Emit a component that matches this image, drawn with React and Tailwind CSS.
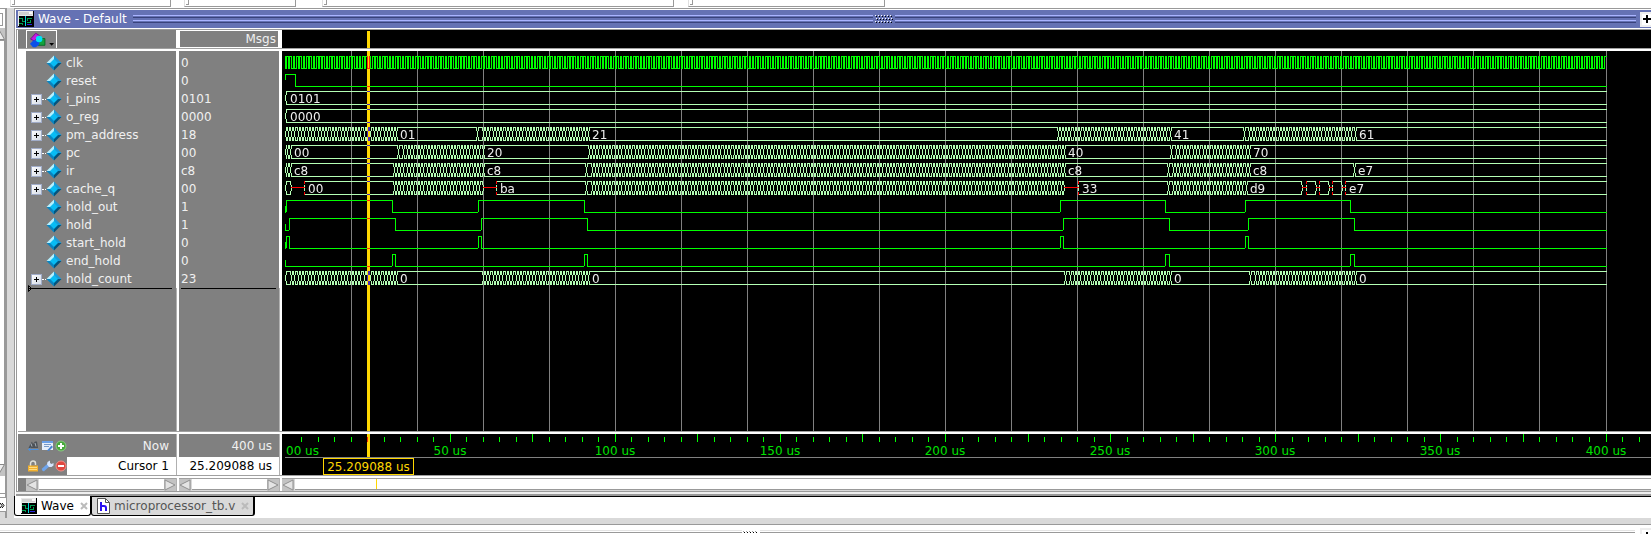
import React from "react";

const PX_PER_US = 3.3025;
const ORIGIN = 3;
const END = 1325;
const ROW = 18;
const CURSOR_X = 85;

const box = (x, y, w, h) => `M${x} ${y}h${w}v${h}h${-w}z`;
const timeX = (us) => Math.floor(ORIGIN + us * PX_PER_US);

const signals = [
  { name: "clk", value: "0", clock: true },
  { name: "reset", value: "0", highs: [[3, 13]] },
  { name: "i_pins", value: "0101", bus: [["v", 3, "0101"]] },
  { name: "o_reg", value: "0000", bus: [["v", 3, "0000"]] },
  { name: "pm_address", value: "18", bus: [["h", 3], ["v", 114, "01"], ["h", 195], ["v", 306, "21"], ["h", 776], ["v", 888, "41"], ["h", 962], ["v", 1073, "61"]] },
  { name: "pc", value: "00", bus: [["v", 3], ["v", 5], ["v", 8, "00"], ["h", 116], ["v", 201, "20"], ["h", 307], ["v", 782, "40"], ["h", 889], ["v", 967, "70"]] },
  { name: "ir", value: "c8", bus: [["v", 3], ["v", 5], ["v", 8, "c8"], ["h", 112], ["v", 201, "c8"], ["h", 304], ["v", 782, "c8"], ["h", 886], ["v", 967, "c8"], ["v", 1072, "e7"]] },
  { name: "cache_q", value: "00", bus: [["v", 3], ["z", 9], ["v", 22, "00"], ["h", 112], ["z", 201], ["v", 214, "ba"], ["h", 304], ["z", 782], ["v", 796, "33"], ["h", 886], ["v", 964, "d9"], ["z", 1020], ["v", 1024], ["z", 1034], ["v", 1037], ["z", 1047], ["v", 1050], ["z", 1060], ["v", 1063, "e7"]] },
  { name: "hold_out", value: "1", start: true, highs: [[4, 110], [196, 302], [778, 883], [963, 1068]] },
  { name: "hold", value: "1", start: true, highs: [[7, 113], [199, 305], [781, 887], [966, 1072]] },
  { name: "start_hold", value: "0", start: true, highs: [[4, 7], [196, 199], [778, 781], [963, 966]] },
  { name: "end_hold", value: "0", start: true, highs: [[110, 113], [302, 305], [883, 887], [1068, 1072]] },
  { name: "hold_count", value: "23", bus: [["v", 3], ["h", 9], ["v", 114, "0"], ["h", 201], ["v", 306, "0"], ["h", 783], ["v", 888, "0"], ["h", 968], ["v", 1073, "0"]] },
];

function clockPath(top) {
  let d = "";
  for (let k = 0; k < 800; k++) {
    const x = timeX(k / 2);
    const next = timeX((k + 1) / 2);
    d += box(x, top + 2, 1, 12);
    d += box(x, k % 2 ? top + 2 : top + 14, next - x + 1, 1);
  }
  return d;
}

function bitPath(top, highs, start) {
  let d = "";
  let x = ORIGIN;
  if (start) d += box(ORIGIN, top + 8, 1, 6);
  highs.forEach(([a, b]) => {
    if (a > x) d += box(x, top + 14, a - x, 1);
    d += box(a, top + 2, 1, a === ORIGIN ? 6 : 12);
    d += box(a, top + 2, b - a + 1, 1) + box(b, top + 2, 1, 12);
    x = b;
  });
  return d + box(x, top + 14, END - x, 1);
}

function busPaths(top, bus) {
  let line = "";
  let floating = "";
  const segments = [];
  bus.forEach(([kind, x, label], i) => {
    const end = i + 1 < bus.length ? bus[i + 1][1] : END;
    if (kind !== "h") {
      segments.push([kind, x, end, label]);
      return;
    }
    let at = x;
    for (let k = 1; k < 401; k++) {
      const next = timeX(k);
      if (next > x + 2 && next < end - 2) {
        segments.push(["v", at, next]);
        at = next;
      }
    }
    segments.push(["v", at, end]);
  });
  segments.forEach(([kind, a, b], i) => {
    if (kind === "z") {
      floating += box(a, top + 7, b - a, 1);
      return;
    }
    const afterFloat = i > 0 && segments[i - 1][0] === "z";
    line += box(a + 1, top + 1, Math.max(b - a - 1, 1), 1) + box(a + 1, top + 14, Math.max(b - a - 1, 1), 1);
    line += box(a, top + 5, 1, 6);
    if (afterFloat) {
      floating += box(a, top + 1, 1, 3) + box(a, top + 12, 1, 3) + box(a, top + 7, 1, 1);
    } else {
      line += box(a + 1, top + 2, 1, 3) + box(a + 1, top + 11, 1, 3);
    }
    if (b < END) {
      line += box(b - 1, top + 2, 1, 3) + box(b - 1, top + 11, 1, 3) + box(b, top + 5, 1, 6);
    }
  });
  return { line, floating };
}

function Trace({ signal, index }) {
  const top = 3 + index * ROW;
  if (signal.clock) return <path d={clockPath(top)} fill="#00ff00" />;
  if (signal.highs) return <path d={bitPath(top, signal.highs, signal.start)} fill="#00ff00" />;
  const { line, floating } = busPaths(top, signal.bus);
  return (
    <g>
      <path d={line} fill="#b4ffb4" />
      <path d={floating} fill="#ff0000" />
      {signal.bus.filter((s) => s[2]).map(([, x, label]) => (
        <text key={x} x={x === ORIGIN ? x + 5 : x + 4} y={top + 13} fill="#eeeeee" fontSize="12">{label}</text>
      ))}
    </g>
  );
}

function CursorLine() {
  return <rect x={CURSOR_X} y="0" width="3" height="100%" fill="#ffd700" className="mix-blend-difference" />;
}

function WaveCanvas() {
  const grid = Array.from({ length: 20 }, (_, i) => timeX((i + 1) * 20));
  return (
    <svg width="100%" height="100%" shapeRendering="crispEdges" className="absolute inset-0 isolate" aria-label="Waveforms">
      {grid.map((x) => <rect key={x} x={x} y="0" width="1" height="100%" fill="#808080" />)}
      {signals.map((s, i) => <Trace key={s.name} signal={s} index={i} />)}
      <CursorLine />
    </svg>
  );
}

function Ruler() {
  const ticks = Array.from({ length: 82 }, (_, i) => (i + 1) * 5);
  return (
    <svg width="100%" height="24" shapeRendering="crispEdges" className="isolate block shrink-0" aria-label="Time ruler">
      {ticks.map((t) => (
        <rect key={t} x={timeX(t)} y={t % 25 ? 3 : 0} width="1" height={t % 25 ? 5 : 8} fill="#00ff00" />
      ))}
      <text x="4" y="21" fill="#00e000" fontSize="12">00 us</text>
      {[50, 100, 150, 200, 250, 300, 350, 400].map((t) => (
        <text key={t} x={timeX(t)} y="21" fill="#00e000" fontSize="12" textAnchor="middle">{t} us</text>
      ))}
      <rect x="3" y="23" width="100%" height="1" fill="#808080" />
      <rect x={CURSOR_X} y="0" width="3" height="23" fill="#ffd700" />
      <rect x={CURSOR_X} y="3" width="1" height="5" fill="#ff2800" />
    </svg>
  );
}

function HLine() {
  return <div className="h-[3px] shrink-0 border-t border-[#a0a0a0] bg-white" />;
}

function WaveIcon() {
  return (
    <svg width="16" height="16" viewBox="0 0 16 16" shapeRendering="crispEdges" aria-hidden="true" className="shrink-0">
      <path d="M0 0h16v16H0z" fill="#000" />
      <path d="M0 0h15v15H0z" fill="#e8e8e8" />
      <path d="M1 1h13v3H1z" fill="#d0d0d0" />
      <path d="M11 1h3v2h-3z" fill="#f8f8f8" />
      <path d="M1 5h14v10H1z" fill="#000" />
      <path d="M1 7h4v1H1zM4 8h1v3H4zM4 10h3v1H4zM9 7h5v1H9zM9 7h1v3H9zM1 12h3v1H1zM4 12h1v2H4zM9 11h4v1H9zM12 9h1v3h-1z" fill="#00a050" />
      <path d="M7 5h1v10H7z" fill="#00d8e0" />
      <path d="M9 13h5v1H9z" fill="#2828e0" />
    </svg>
  );
}

function ShapesIcon() {
  return (
    <svg width="27" height="16" viewBox="0 0 27 16" aria-hidden="true">
      <path d="M8.500 6.500h7v7h-7z" fill="#12a33c" stroke="#0a6a28" />
      <path d="M.5 7L6 1l4 2.500L4.500 9z" fill="#c41ae0" stroke="#7a0a90" />
      <path d="M0 12l4-4 6 1.500L9.500 13 6 15.500H3z" fill="#0a50e8" />
      <circle cx="9.500" cy="7" r="3.400" fill="#00e0f8" />
      <path d="M20 11h5l-2.500 3z" fill="#000" />
    </svg>
  );
}

function Diamond() {
  return (
    <svg width="16" height="16" viewBox="0 0 16 16" aria-hidden="true" className="shrink-0">
      <path d="M8 .5L.5 8H8z" fill="#b4f0ff" />
      <path d="M8 .5L15.500 8H8z" fill="#1a9ad8" />
      <path d="M.5 8L8 15.500V8z" fill="#0a84c0" />
      <path d="M15.500 8L8 15.500V8z" fill="#03547e" />
      <path d="M8 4l4 4-4 4-4-4z" fill="#08bcf4" />
    </svg>
  );
}

function TimeIcons() {
  return (
    <span className="flex gap-[1px]">
      <svg width="13" height="12" viewBox="0 0 13 12" aria-hidden="true">
        <path d="M1.500 8L4 3l1-1.500L6 4l2-2.500h2L11 8z" fill="#4c5258" />
        <path d="M4 3.500l1 3M8 3l1 3.500" stroke="#a8b0b8" />
        <path d="M1.500 9.500h10M3.500 8L1.500 9.500l2 1.500" fill="none" stroke="#4a90e0" />
      </svg>
      <svg width="13" height="12" viewBox="0 0 13 12" aria-hidden="true">
        <path d="M1 1h11v9H1z" fill="#e6eefa" />
        <path d="M1 1h11v2H1z" fill="#6ba0e8" />
        <path d="M3 4.500h7M3 6.500h5" stroke="#7a9ac8" />
        <path d="M6 10.500l4.500-5L12 7l-4 4z" fill="#4a84d0" />
      </svg>
      <svg width="12" height="12" viewBox="0 0 12 12" aria-hidden="true">
        <circle cx="6" cy="6" r="5" fill="#48a83c" stroke="#8cc884" />
        <path d="M6 3v6M3 6h6" stroke="#fff" strokeWidth="2" />
      </svg>
    </span>
  );
}

function CursorIcons() {
  return (
    <span className="flex gap-[1px]">
      <svg width="13" height="12" viewBox="0 0 13 12" aria-hidden="true">
        <path d="M3.500 6V3.500a2.500 2.500 0 015 0V5" fill="none" stroke="#e0e0d8" strokeWidth="1.500" />
        <path d="M1 5.500h10v6H1z" fill="#f0b030" />
        <path d="M2 7.500h8M2 9.500h8" stroke="#ffdc80" />
      </svg>
      <svg width="13" height="12" viewBox="0 0 13 12" aria-hidden="true">
        <path d="M2.500 9.500L7.500 5" stroke="#6ea4ec" strokeWidth="3.200" strokeLinecap="round" />
        <path d="M6 4.500l.5-2.500L9 .5v2.500l1.500 1L12.500 3v2.500L10.500 7 8 7z" fill="#d4e4fc" />
      </svg>
      <svg width="12" height="12" viewBox="0 0 12 12" aria-hidden="true">
        <circle cx="6" cy="6" r="5" fill="#e04840" stroke="#f09088" />
        <path d="M3 6h6" stroke="#fff" strokeWidth="2" />
      </svg>
    </span>
  );
}

function Arrow({ dir, label }) {
  return (
    <button type="button" aria-label={label} className="h-3 w-3 shrink-0 bg-[#c3c3c3]">
      <svg width="12" height="12" viewBox="0 0 12 12" className="block">
        {dir === "left"
          ? <path d="M11 1L1 6l10 5z" fill="#e4e4e4" stroke="#909090" />
          : <path d="M1 1l10 5-10 5z" fill="#e4e4e4" stroke="#909090" />}
      </svg>
    </button>
  );
}

function ScrollBar({ label, right = true, marker }) {
  return (
    <div role="group" aria-label={label} className="flex h-[13px] min-w-0 flex-1 border-t border-[#a0a0a0] bg-[#d9d9d9]">
      <Arrow dir="left" label={`${label}: scroll left`} />
      <div className="ml-px flex h-[11px] flex-1 border-b border-[#999999] bg-white">
        {marker && <span className="ml-[81px] h-full w-px bg-[#ffd700]" />}
      </div>
      {right && <Arrow dir="right" label={`${label}: scroll right`} />}
    </div>
  );
}

function VLine() {
  return <div className="w-[3px] shrink-0 border-l border-[#b0b0b0] bg-white" />;
}

function SignalTable() {
  return (
    <table className="w-full table-fixed border-separate border-spacing-0">
      <colgroup>
        <col className="w-[8px]" />
        <col className="w-[153px]" />
        <col />
      </colgroup>
      <thead>
        <tr className="h-[18px] bg-[#808080]">
          <th className="p-0" />
          <th className="border-r-[3px] border-r-white p-0 text-left">
            <button type="button" aria-label="Signal filter" className="flex h-[18px] w-[31px] items-end border border-b-0 border-white pl-[3px]">
              <ShapesIcon />
            </button>
          </th>
          <th className="border-r-[3px] border-r-white p-0 font-normal">
            <div className="h-[18px] border border-white pr-[2px] text-right leading-[17px]">Msgs</div>
          </th>
        </tr>
        <tr aria-hidden="true" className="h-[3px]">
          <td colSpan={3} className="border-t border-[#a0a0a0] bg-white p-0" />
        </tr>
        <tr aria-hidden="true" className="h-[3px]">
          <td className="bg-white p-0" />
          <td className="border-r-[3px] border-white p-0" />
          <td className="border-r-[3px] border-white p-0" />
        </tr>
      </thead>
      <tbody>
        {signals.map((s) => (
          <tr key={s.name} className="h-[18px]">
            <td className="bg-white p-0" />
            <td className="border-r-[3px] border-white p-0">
              <div className="flex h-[18px] items-center pl-[5px]">
                {s.bus ? (
                  <span className="flex w-[15px] items-center">
                    <button type="button" aria-label={`Expand ${s.name}`} className="flex h-[11px] w-[11px] shrink-0 items-center justify-center bg-linear-to-br from-white to-[#d0d8e4] outline-1 -outline-offset-1 outline-[#a0acc8]">
                      <svg width="5" height="5" viewBox="0 0 5 5" shapeRendering="crispEdges"><path d="M2 0h1v5H2zM0 2h5v1H0z" /></svg>
                    </button>
                    <span className="w-1 border-t border-dotted border-white" />
                  </span>
                ) : <span className="w-[15px]" />}
                <Diamond />
                <span className="pl-1">{s.name}</span>
              </div>
            </td>
            <td className="border-r-[3px] border-white p-0 pl-[2px]">{s.value}</td>
          </tr>
        ))}
      </tbody>
    </table>
  );
}

function NamePanes() {
  return (
    <div className="flex w-[264px] shrink-0 flex-col bg-[#808080] text-xs leading-[18px] text-[#f0f0f0]">
      <SignalTable />
      <div className="flex flex-1">
        <div className="w-2 bg-white" />
        <div className="w-[150px] pl-[2px] pr-1">
          <div className="relative border-t border-black">
            <svg width="4" height="7" viewBox="0 0 4 7" className="absolute -top-1 left-0" aria-hidden="true"><path d="M.5 .5v6l3-3z" fill="none" stroke="#000" /></svg>
          </div>
        </div>
        <VLine />
        <div className="flex-1 pl-[2px] pr-[3px]"><div className="border-t border-black" /></div>
        <VLine />
      </div>
      <HLine />
      <div className="flex h-[23px]">
        <div className="flex w-[158px] items-center justify-between pl-[9px] pr-[7px]"><TimeIcons />Now</div>
        <VLine />
        <div className="flex flex-1 items-center justify-end pr-[7px]">400 us</div>
        <VLine />
      </div>
      <div className="flex h-[18px] text-black">
        <div className="flex w-[49px] items-center pl-[9px]"><CursorIcons /></div>
        <div className="w-[109px] bg-white pr-[7px] text-right">Cursor 1</div>
        <VLine />
        <div className="flex-1 bg-white pr-[7px] text-right">25.209088 us</div>
        <VLine />
      </div>
      <HLine />
      <div className="flex h-[13px]">
        <div className="w-2" />
        <div className="flex w-[150px]"><ScrollBar label="Names" /></div>
        <VLine />
        <ScrollBar label="Values" />
        <VLine />
      </div>
    </div>
  );
}

function WavePane() {
  return (
    <div className="flex min-w-0 flex-1 flex-col bg-black">
      <svg width="100%" height="18" className="block shrink-0" shapeRendering="crispEdges"><rect x={CURSOR_X} y="1" width="3" height="17" fill="#ffd700" /></svg>
      <HLine />
      <div className="relative min-h-[240px] flex-1"><WaveCanvas /></div>
      <HLine />
      <Ruler />
      <div className="flex h-[17px] shrink-0 pl-[41px]">
        <span className="h-[17px] w-[91px] border border-[#ffd700] text-center text-xs leading-4 text-[#ffd700]">25.209088 us</span>
      </div>
      <HLine />
      <div className="flex h-[13px] shrink-0">
        <ScrollBar label="Waveforms" right={false} marker />
      </div>
    </div>
  );
}

function PlusButton({ label }) {
  return (
    <button type="button" aria-label={label} className="flex h-[15px] w-[11px] shrink-0 items-center justify-end overflow-hidden border-2 border-r-0 border-[#eeeeee] bg-white">
      <svg width="8" height="8" viewBox="0 0 8 8" shapeRendering="crispEdges" className="shrink-0"><path d="M3 0h2v8H3zM0 3h8v2H0z" /></svg>
    </button>
  );
}

function Stripes() {
  return (
    <div className="flex h-2 flex-1 flex-col justify-between">
      <div className="h-[3px] border-t border-b border-t-[#aab4ff] border-b-[#39427c]" />
      <div className="h-[3px] border-t border-b border-t-[#aab4ff] border-b-[#39427c]" />
    </div>
  );
}

function TitleBar() {
  const dots = [0, 1, 2, 3, 4, 5];
  return (
    <div className="flex h-[18px] shrink-0 items-center bg-[#6572b4] pl-[2px] text-xs text-white">
      <WaveIcon />
      <h1 className="pl-1 pr-[6px]">Wave - Default</h1>
      <Stripes />
      <svg width="22" height="8" shapeRendering="crispEdges" aria-hidden="true">
        {[0, 3, 6].map((y, r) => dots.map((i) => (
          <g key={`${y}-${i}`}>
            <rect x={2 + i * 3 + (r % 2)} y={y} width="1" height="1" fill="#fff" />
            <rect x={3 + i * 3 + (r % 2)} y={y + 1} width="1" height="1" fill="#000" />
          </g>
        )))}
      </svg>
      <Stripes />
      <span className="w-1" />
      <PlusButton label="Maximize Wave" />
    </div>
  );
}

function ToolbarGroup({ width }) {
  return (
    <div className={`${width} flex h-[7px] border-b border-r border-[#999999] border-l border-l-[#e0e0e0]`}>
      <div className="ml-px h-[5px] w-[3px] border-b border-r border-[#999999]" />
    </div>
  );
}

function SideStrip() {
  return (
    <div className="flex w-[14px] shrink-0 bg-[#d9d9d9]">
      <div className="flex w-[7px] flex-col border-r-2 border-t border-[#999999] bg-white">
        <div className="mt-1 h-[13px] w-[3px] border border-l-0 border-[#999999]" />
        <div className="mt-[2px] h-[12px] bg-[#c3c3c3]">
          <svg width="5" height="12" className="block"><path d="M-2 0L4.500 11.500H-2" fill="#eee" stroke="#888" /></svg>
        </div>
        <div className="flex-1 border-r border-t border-[#999999]" />
        <div className="h-3 bg-[#c3c3c3]">
          <svg width="5" height="12" className="block"><path d="M-2 .5H4.500L-2 11.500" fill="#eee" stroke="#888" /></svg>
        </div>
        <div className="h-[18px] border-b border-[#999999]" />
        <button type="button" aria-label="More tabs" className="mt-[3px] h-[15px] w-[7px] border border-l-0 border-[#999999] bg-white">
          <svg width="6" height="12" className="block"><path d="M0 4l2 2.500L0 9M2 4l2 2.500L2 9" fill="none" stroke="#000" /></svg>
        </button>
        <div className="h-[6px] bg-[#d9d9d9]" />
      </div>
    </div>
  );
}

function CloseIcon() {
  return <svg width="8" height="8" viewBox="0 0 8 8"><path d="M1 1l6 6M7 1L1 7" stroke="#bbbbbb" strokeWidth="2" /></svg>;
}

function Tabs() {
  return (
    <div className="flex h-[22px] shrink-0 bg-white text-xs">
      <div className="flex h-[20px] w-[77px] items-center rounded-b-[3px] border-b border-l border-r border-black bg-white pl-[6px]">
        <WaveIcon />
        <a href="#wave" className="pl-1 text-black">Wave</a>
        <button type="button" aria-label="Close Wave" className="ml-[6px]"><CloseIcon /></button>
      </div>
      <div className="flex flex-1 border-t border-black">
        <div className="flex h-[19px] w-[164px] items-center rounded-b-[3px] border-b border-r-2 border-l border-black bg-[#d9d9d9] pl-[5px]">
          <svg width="13" height="16" viewBox="0 0 13 16" aria-hidden="true">
            <path d="M.5 .5h8l4 4v11H.5z" fill="#fff" stroke="#555" />
            <path d="M8.500 .5v4h4" fill="none" stroke="#555" />
            <path d="M4 4v9M4 8h3q2 0 2 2v3" fill="none" stroke="#2a10f0" strokeWidth="2" />
          </svg>
          <a href="#microprocessor_tb" className="pl-1 text-[#555555]">microprocessor_tb.v</a>
          <button type="button" aria-label="Close microprocessor_tb.v" className="ml-[6px]"><CloseIcon /></button>
        </div>
      </div>
    </div>
  );
}

function BottomStripe() {
  return <div className="h-[3px] flex-1 border-b border-t border-t-[#e4e4e4] border-b-[#999999]" />;
}

export default function App() {
  return (
    <div className="flex min-h-screen flex-col overflow-hidden bg-white [font-family:'DejaVu_Sans',sans-serif]">
      <div className="flex h-2 shrink-0 pl-[10px]">
        <ToolbarGroup width="w-[161px]" />
        <div className="w-[13px]" />
        <ToolbarGroup width="w-[112px]" />
        <div className="w-[26px]" />
        <ToolbarGroup width="w-[352px]" />
        <div className="w-[14px]" />
        <ToolbarGroup width="w-[197px]" />
      </div>
      <div className="flex flex-1">
        <SideStrip />
        <main className="flex min-w-0 flex-1 flex-col">
          <section className="flex flex-1 flex-col border-l border-t border-[#999999] pl-px pt-px">
            <TitleBar />
            <div className="h-[2px] shrink-0 border-b border-[#999999]" />
            <div className="flex flex-1 border-l border-[#999999] pl-px">
              <NamePanes />
              <WavePane />
            </div>
            <div className="h-[5px] shrink-0 border-b-2 border-t border-[#999999] bg-[#eeeeee]" />
          </section>
          <Tabs />
        </main>
      </div>
      <div className="h-[7px] shrink-0 border-b border-[#999999] bg-[#d9d9d9]" />
      <div className="flex h-[9px] shrink-0 overflow-hidden">
        <div className="flex flex-[742] pt-[5px]"><BottomStripe /></div>
        <svg width="18" height="9" shapeRendering="crispEdges" aria-hidden="true">
          {[0, 1, 2, 3, 4].map((i) => (
            <g key={i}>
              <rect x={1 + i * 3} y="6" width="1" height="1" fill="#999" />
              <rect x={2 + i * 3} y="7" width="1" height="1" fill="#000" />
            </g>
          ))}
        </svg>
        <div className="flex flex-[876] pt-[5px]"><BottomStripe /></div>
        <div className="pl-[5px] pt-[3px]"><PlusButton label="Maximize transcript" /></div>
      </div>
    </div>
  );
}
